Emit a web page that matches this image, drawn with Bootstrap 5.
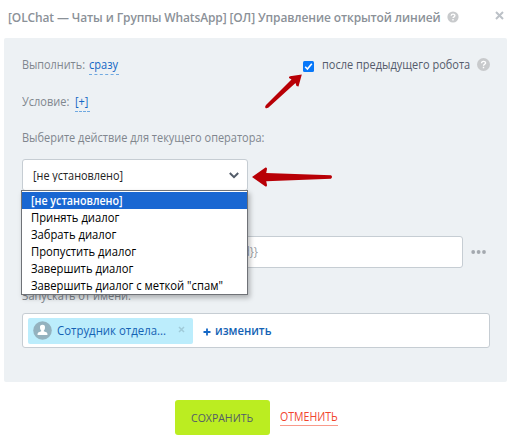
<!DOCTYPE html>
<html lang="ru">
<head>
<meta charset="utf-8">
<meta name="viewport" content="width=device-width, initial-scale=1">
<title>Управление открытой линией</title>
<link href="https://cdn.jsdelivr.net/npm/bootstrap@5.3.0/dist/css/bootstrap.min.css" rel="stylesheet">
<style>
body{font-family:"Open Sans",sans-serif;font-size:12px;line-height:18px;color:#80868e;background:#fff;height:443px;overflow:hidden}
/* condensed labels: the width is the space kept after scaling */
.fit{display:inline-block;white-space:nowrap;transform:scaleX(.915);transform-origin:0 50%;flex:none}
.dlg-head{height:38px;padding:0 7px 4px 8px}
.dlg-title{font-size:13px;font-weight:600;color:#8b9198;letter-spacing:-.12px;width:433px;transform:scaleX(.921)}
.head-close{margin:0 0 4px auto}
.head-help{margin-left:6px}
.panel{margin:0 4px;height:344px;background:#edf1f4;border-radius:2px;padding:18px 17px 0 18px}
.line{height:18px}
.dash{color:#1467c5;border-bottom:1px dashed #70a9e0;line-height:17px;height:19px;text-decoration:none;font-weight:500}
.run-label{width:67px;transform:scaleX(.905)}
.run-link{width:30px}.run-link .fit{transform:scaleX(.92)}
.cond-label{width:53px}
.cond-link{width:15px}
.after{color:#545b6b}
.after .fit{width:148px}
.chk{margin:3px 8px 0 0}.help2{margin:0 0 2px 7px}
.row2{margin-top:19px}.row3{margin-top:18px}
.row4{margin-top:45px}.dots{margin-left:8px}
.row5{margin-top:19px;margin-bottom:8px}
.box{background:#fff;border:1px solid #c6cdd3;border-radius:3px}
.sel{width:226px;height:32px;padding:0 8px 0 10px;margin-top:12px;color:#222}
.sel-text{width:92px;transform:scaleX(.905);margin-top:2px;clip-path:inset(4px -30px 3px 0)}
.opts{left:-2px;top:30px;width:227px;height:105px;border:1px solid #6f7277;background:#fff;z-index:5;box-shadow:2px 3px 5px rgba(0,0,0,.27);padding:1px 0;color:#000}
.opts li{height:17px;line-height:17px;padding-left:9px}
.opts .fit{transform:scaleX(.937)}
.opts li.on{background:#1967d2;color:#fff;font-weight:600}
.opts .on .fit{transform:scaleX(.89)}
.inp{width:441px;height:32px;color:#969ba2}
.inp .fit{margin-left:220px}
.who{width:468px;height:35px;padding:0 5px}
.tag{width:165px;height:26px;background:#bcedfc;border-radius:2px;padding:0 8px 0 5px;color:#1462b4;font-weight:500}
.tag .fit{margin-left:5px;width:109px;transform:scaleX(.95)}
.tag .tag-x{margin:0 0 3px auto}
.plus{margin:2px 4px 0 10px}
.edit{color:#1462b4;font-weight:600}
.edit.fit{transform:scaleX(.94)}
footer{padding:18px 0 0 175px}
.save{width:95px;height:35px;background:#bbed21;color:#535c69;border-radius:3px;font-size:11.5px;text-align:left}
.save .fit{margin-left:16px}
.cancel{margin:0 0 1px 10px;color:#f1452e;border-bottom:1px solid #f99a8b;text-decoration:none;line-height:16px;height:17px;width:58px}
.cancel .fit{transform:scaleX(.88)}
.arrow-layer{left:0;top:0;z-index:10;pointer-events:none}
</style>
<script src="https://cdn.jsdelivr.net/npm/bootstrap@5.3.0/dist/js/bootstrap.bundle.min.js"></script>
</head>
<body class="position-relative">
<header class="dlg-head d-flex align-items-center">
  <span class="dlg-title fit">[OLChat — Чаты и Группы WhatsApp] [ОЛ] Управление открытой линией</span>
  <svg class="head-help" width="12" height="12" viewBox="0 0 12 12"><circle cx="6" cy="6" r="5.6" fill="#c8cacc"/><path d="M4.2 4.8C4.2 2.5 7.9 2.6 7.9 4.6C7.9 5.8 6 5.8 6 7.1M6 8.1V9.4" fill="none" stroke="#fff" stroke-width="1.4"/></svg>
  <svg class="head-close" width="9" height="9" viewBox="0 0 9 9"><path d="M1 1L8 8M8 1L1 8" stroke="#bcc1c7" stroke-width="2"/></svg>
</header>
<main class="panel">
  <div class="line d-flex align-items-center">
    <span class="fit run-label">Выполнить:</span><a class="dash run-link" href="#"><span class="fit">сразу</span></a>
    <label class="ms-auto d-flex align-items-center after"><svg class="chk" width="11" height="11" viewBox="0 0 11 11"><rect width="11" height="11" rx="1.5" fill="#0878f9"/><path d="M2.200 5.800L4.400 8L8.800 2.700" fill="none" stroke="#fff" stroke-width="1.6"/></svg><span class="fit">после предыдущего робота</span></label>
    <svg class="help2" width="13" height="13" viewBox="0 0 12 12"><circle cx="6" cy="6" r="6" fill="#c8cacc"/><path d="M4.200 4.800C4.200 2.500 7.900 2.600 7.900 4.600C7.900 5.800 6 5.800 6 7.100M6 8.100V9.400" fill="none" stroke="#fff" stroke-width="1.3"/></svg>
  </div>
  <div class="line row2 d-flex align-items-center"><span class="fit cond-label">Условие:</span><a class="dash cond-link" href="#"><span class="fit">[+]</span></a></div>
  <div class="line row3 d-flex align-items-center"><span class="fit">Выберите действие для текущего оператора:</span></div>
  <div class="box sel position-relative d-flex align-items-center justify-content-between">
    <span class="fit sel-text">[не установлено]</span>
    <svg width="10" height="7" viewBox="0 0 10 7"><path d="M.8 1L5 5.200L9.200 1" fill="none" stroke="#535c69" stroke-width="2"/></svg>
    <ul class="opts list-unstyled position-absolute mb-0 text-nowrap">
      <li class="on"><span class="fit">[не установлено]</span></li>
      <li><span class="fit">Принять диалог</span></li>
      <li><span class="fit">Забрать диалог</span></li>
      <li><span class="fit">Пропустить диалог</span></li>
      <li><span class="fit">Завершить диалог</span></li>
      <li><span class="fit">Завершить диалог с меткой "спам"</span></li>
    </ul>
  </div>
  <div class="row4 d-flex align-items-center">
    <div class="box inp d-flex align-items-center"><span class="fit">d}}</span></div>
    <svg class="dots" width="16" height="6" viewBox="0 0 16 6"><g fill="#a4a9af"><circle cx="2.2" cy="3" r="1.9"/><circle cx="7.6" cy="3" r="1.9"/><circle cx="13" cy="3" r="1.9"/></g></svg>
  </div>
  <div class="line row5 d-flex align-items-center"><span class="fit">Запускать от имени:</span></div>
  <div class="box who d-flex align-items-center">
    <div class="tag d-flex align-items-center">
      <svg width="19" height="19" viewBox="0 0 19 19"><circle cx="9.500" cy="9.500" r="9.300" fill="#94b2bf"/><path d="M9.500 3.800C7.500 3.800 6.800 5 7 6.800C7.100 8.200 7.600 9 8.200 9.500V10.300L5.200 11.600Q4.600 12 4.500 14H14.500Q14.400 12 13.800 11.600L10.800 10.300V9.500C11.500 9 11.900 8.200 12 6.800C12.200 5 11.500 3.800 9.500 3.800Z" fill="#fff"/></svg>
      <span class="fit">Сотрудник отдела...</span>
      <svg class="tag-x" width="7" height="7" viewBox="0 0 7 7"><path d="M1 1L6 6M6 1L1 6" stroke="#a0cbd9" stroke-width="1.500"/></svg>
    </div>
    <svg class="plus" width="8" height="8" viewBox="0 0 8 8"><path d="M.5 4H7.500M4 .5V7.500" stroke="#1467c5" stroke-width="1.800"/></svg>
    <span class="edit fit">изменить</span>
  </div>
</main>
<footer class="d-flex align-items-center">
  <button class="save border-0 p-0" type="button"><span class="fit">СОХРАНИТЬ</span></button>
  <a class="cancel" href="#"><span class="fit">ОТМЕНИТЬ</span></a>
</footer>
<svg class="arrow-layer position-absolute" width="511" height="443" viewBox="0 0 511 443" fill="#b80006">
  <path d="M301.800 74.500L298.500 86.500L296.500 86L295.500 83L268.500 107.500Q266.500 108.800 265.300 107.700Q264.700 106.500 266 105L291.500 79.500L289 78Q288.500 77 290 76.200Z"/>
  <path d="M252 177L265.500 167.500Q267.200 167.200 267 169L266.200 173L331 175.300Q333 177 331 178.700L266.200 181.300L267 185Q267.200 186.800 265.500 186.500Z"/>
</svg>
</body>
</html>
